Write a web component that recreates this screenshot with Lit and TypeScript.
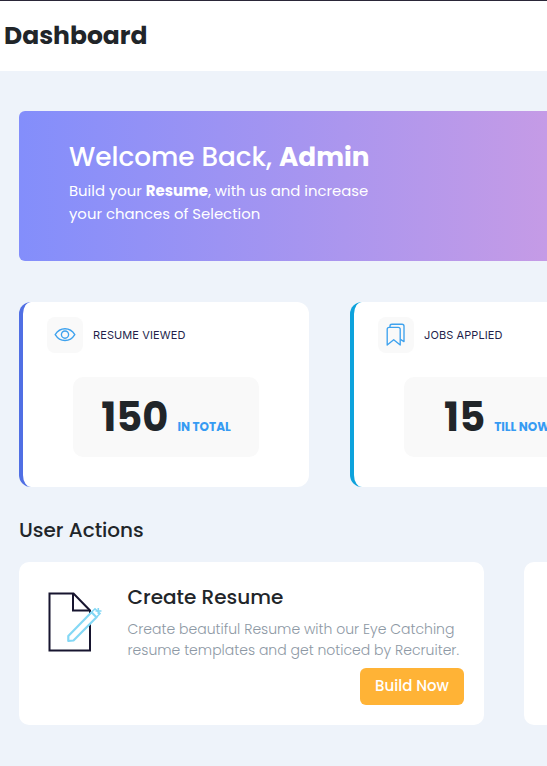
import { LitElement, html, css, svg } from "lit";
import { customElement, property } from "lit/decorators.js";

const eyeIcon = svg`
  <svg width="22" height="22" viewBox="0 0 22 22" fill="none" stroke="#3ea2ee" stroke-width="1.35">
    <path d="M1.2 10.6C6 2.8 16 2.8 20.8 10.6C16 18.4 6 18.4 1.2 10.6Z" />
    <circle cx="11" cy="10.6" r="3.6" />
  </svg>`;

const bookmarksIcon = svg`
  <svg width="22" height="24" viewBox="0 0 22 24" fill="none" stroke="#3ea2ee" stroke-width="1.35" stroke-linejoin="round">
    <path d="M2.2 22V6.3Q2.2 4.3 4.2 4.3H13.2Q15.2 4.3 15.2 6.3V22L8.7 16.7Z" />
    <path d="M5 4.3V3Q5 1.2 7 1.2H17Q19 1.2 19 3.2V18.6L15.4 16.4" />
  </svg>`;

const resumeIcon = svg`
  <svg width="56" height="62" viewBox="0 0 56 62" fill="none">
    <path d="M2.5 2.5H26.5L43 19.5V59.5H2.5Z" stroke="#17152f" stroke-width="2" />
    <path d="M26 2.5V19.5H43" stroke="#17152f" stroke-width="2" />
    <path d="M21.3 50V45L44.5 21.3L49.5 26.3L26.5 49.5Z" fill="#fff" stroke="#84d8f5" stroke-width="2.2" stroke-linejoin="round" />
    <path d="M44.5 21.3L48 17.8L53 22.6L49.5 26.3M48.5 20H54.5M51.3 17V23" stroke="#84d8f5" stroke-width="1.6" />
  </svg>`;

@customElement("stat-card")
export class StatCard extends LitElement {
  @property() label = "";
  @property() value = "";
  @property() note = "";
  @property() icon = "eye";

  static styles = css`
    :host {
      display: block;
      box-sizing: border-box;
      flex: none;
      width: 290px;
      height: 185px;
      padding: 15px 50px 0 24px;
      background: #fff;
      border-left: 4px solid var(--accent);
      border-radius: 12px;
    }
    .head { display: flex; align-items: center; height: 36px; }
    .icon {
      display: grid; place-items: center;
      width: 36px; height: 36px; border-radius: 8px; background: #f9f9f9;
    }
    .label {
      margin-left: 10px; font-family: Inter, sans-serif; font-size: 11px; line-height: 14px;
      color: #241f4b; letter-spacing: 0.1px;
    }
    .figure {
      display: flex; justify-content: center; align-items: baseline; gap: 9px;
      box-sizing: border-box; width: 186px; height: 80px; margin: 24px 0 0 26px;
      background: #f9f9f9; border-radius: 10px; line-height: 80px;
    }
    .value { font-size: 40px; font-weight: 700; color: #212529; }
    .note { font-size: 12px; font-weight: 700; color: #369bf3; }
  `;

  render() {
    return html`
      <div class="head">
        <div class="icon">${this.icon === "eye" ? eyeIcon : bookmarksIcon}</div>
        <div class="label">${this.label}</div>
      </div>
      <div class="figure">
        <span class="value">${this.value}</span>
        <span class="note">${this.note}</span>
      </div>`;
  }
}

@customElement("app-root")
export class AppRoot extends LitElement {
  static styles = css`
    :host {
      display: block; box-sizing: border-box; height: 766px; overflow: hidden;
      background: #eef3fa; color: #212529; white-space: nowrap;
      font-family: Poppins, Inter, sans-serif;
    }
    h1, h2, h3, p { margin: 0; }
    .header {
      display: flex; align-items: center; box-sizing: border-box; height: 71px;
      padding: 0 0 0 4px; background: #fff; border-top: 1px solid #2a2638;
    }
    h1 { font-size: 25px; line-height: 38px; font-weight: 700; }
    .content { padding: 40px 0 0 19px; }
    .banner {
      box-sizing: border-box; width: 620px; height: 150px; padding: 28px 0 0 50px;
      color: #fff; border-radius: 6px;
      background: linear-gradient(90deg, #838efb 0, #c59be6 528px);
    }
    .welcome { font-size: 26.3px; font-weight: 500; line-height: 36px; }
    .welcome b { font-weight: 700; }
    .intro { margin-top: 4px; font-size: 14.87px; line-height: 23px; font-weight: 400; }
    .intro b { font-weight: 700; }
    .stats { display: flex; gap: 41px; margin-top: 41px; }
    .blue { --accent: #506fe4; }
    .cyan { --accent: #0da2dc; }
    h2 { margin-top: 28px; font-size: 20px; line-height: 30px; font-weight: 500; }
    .actions { display: flex; gap: 40px; margin-top: 17px; }
    .action {
      display: flex; flex: none; box-sizing: border-box; width: 465px; height: 163px;
      padding: 22px 20px 0 28px; background: #fff; border-radius: 10px;
    }
    .picture { width: 80.5px; padding-top: 7px; }
    .body { display: flex; flex: 1; flex-direction: column; }
    h3 { font-size: 20px; line-height: 26px; font-weight: 500; }
    .text { margin-top: 9px; font-size: 14px; line-height: 21px; font-weight: 300; color: #8d98a4; }
    button {
      align-self: flex-end; width: 104px; height: 37px; margin-top: 7px; padding: 0 0 2px;
      border: 0; border-radius: 6px; background: #ffb336; color: #fff;
      font: 500 15px Poppins, Inter, sans-serif;
    }
  `;

  render() {
    return html`
      <div class="header"><h1>Dashboard</h1></div>
      <div class="content">
        <div class="banner">
          <p class="welcome">Welcome Back, <b>Admin</b></p>
          <p class="intro">
            Build your <b>Resume</b>, with us and increase<br />
            your chances of Selection
          </p>
        </div>
        <div class="stats">
          <stat-card class="blue" label="RESUME VIEWED" value="150" note="IN TOTAL" icon="eye"></stat-card>
          <stat-card class="cyan" label="JOBS APPLIED" value="15" note="TILL NOW" icon="bookmarks"></stat-card>
        </div>
        <h2>User Actions</h2>
        <div class="actions">
          <div class="action">
            <div class="picture">${resumeIcon}</div>
            <div class="body">
              <h3>Create Resume</h3>
              <p class="text">
                Create beautiful Resume with our Eye Catching<br />
                resume templates and get noticed by Recruiter.
              </p>
              <button>Build Now</button>
            </div>
          </div>
          <div class="action"></div>
        </div>
      </div>`;
  }
}
